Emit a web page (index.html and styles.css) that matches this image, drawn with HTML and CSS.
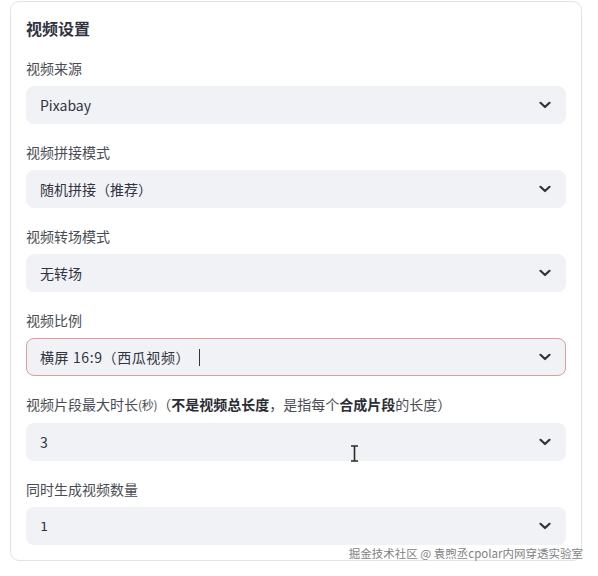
FILE: index.html
```html
<!DOCTYPE html>
<html lang="zh">
<head>
<meta charset="utf-8">
<link rel="stylesheet" href="styles.css">
</head>
<body>
<div class="card">
  <div class="title">视频设置</div>
  <div class="field">
    <div class="label">视频来源</div>
    <div class="select"><span class="value">Pixabay</span><svg class="chev" viewBox="0 0 12 8"><path d="M1.5 1.8 L6 6 L10.5 1.8"/></svg></div>
  </div>
  <div class="field">
    <div class="label">视频拼接模式</div>
    <div class="select"><span class="value">随机拼接（推荐）</span><svg class="chev" viewBox="0 0 12 8"><path d="M1.5 1.8 L6 6 L10.5 1.8"/></svg></div>
  </div>
  <div class="field">
    <div class="label">视频转场模式</div>
    <div class="select"><span class="value">无转场</span><svg class="chev" viewBox="0 0 12 8"><path d="M1.5 1.8 L6 6 L10.5 1.8"/></svg></div>
  </div>
  <div class="field">
    <div class="label">视频比例</div>
    <div class="select focus"><span class="value wide">横屏 16:9（西瓜视频）<span class="caret"></span></span><svg class="chev" viewBox="0 0 12 8"><path d="M1.5 1.8 L6 6 L10.5 1.8"/></svg></div>
  </div>
  <div class="field">
    <div class="label">视频片段最大时长<span class="small">(秒)</span>（<b>不是视频总长度</b>，是指每个<b>合成片段</b>的长度）</div>
    <div class="select"><span class="value">3</span><svg class="chev" viewBox="0 0 12 8"><path d="M1.5 1.8 L6 6 L10.5 1.8"/></svg>
      <svg class="ibeam" viewBox="0 0 9 17"><path d="M1 1 H8 M4.5 1 V16 M1 16 H8"/></svg>
    </div>
  </div>
  <div class="field">
    <div class="label">同时生成视频数量</div>
    <div class="select"><span class="value mono">1</span><svg class="chev" viewBox="0 0 12 8"><path d="M1.5 1.8 L6 6 L10.5 1.8"/></svg></div>
  </div>
</div>
<div class="watermark">掘金技术社区 @ 袁煦丞cpolar内网穿透实验室</div>
</body>
</html>
```
FILE: styles.css
```css
html, body {
  margin: 0;
  padding: 0;
  background: #ffffff;
}
body {
  font-family: "Noto Sans CJK SC", "Noto Sans", sans-serif;
  color: #31333f;
  width: 598px;
  height: 576px;
  position: relative;
  overflow: hidden;
}
.card {
  margin: 1px 0 0 10px;
  width: 572px;
  box-sizing: border-box;
  border: 1px solid #e3e3e6;
  border-radius: 9px;
  padding: 14px 15px 15px 15px;
  display: flex;
  flex-direction: column;
  gap: 18px;
}
.title {
  font-size: 16px;
  font-weight: 700;
  line-height: 24px;
  color: #31333f;
}
.field {
  display: flex;
  flex-direction: column;
  gap: 8px;
}
.label {
  font-size: 14px;
  line-height: 20px;
  color: #4a4c55;
  white-space: nowrap;
}
.label b {
  font-weight: 700;
  color: #2b2d36;
}
.label .small {
  font-size: 12px;
  letter-spacing: -0.3px;
}
.select {
  position: relative;
  height: 38px;
  box-sizing: border-box;
  background: #f0f2f6;
  border-radius: 8px;
  border: 1px solid #f0f2f6;
  display: flex;
  align-items: center;
  justify-content: space-between;
  padding: 0 14px 0 13px;
}
.select.focus {
  border-color: #e49b9b;
}
.value {
  font-size: 14px;
  color: #31333f;
  display: flex;
  align-items: center;
}
.value.wide {
  letter-spacing: 0.6px;
}
.value.mono {
  font-family: "DejaVu Sans Mono", monospace;
  font-size: 13px;
}
.caret {
  display: inline-block;
  width: 1px;
  height: 17px;
  background: #31333f;
  margin-left: 9px;
}
.chev {
  width: 12px;
  height: 8px;
  fill: none;
  stroke: #31333f;
  stroke-width: 2.2;
  stroke-linecap: round;
  stroke-linejoin: round;
}
.ibeam {
  position: absolute;
  left: 323px;
  top: 21px;
  width: 9px;
  height: 17px;
  fill: none;
  stroke: #2a2a2a;
  stroke-width: 1.6;
}
.watermark {
  position: absolute;
  right: 15px;
  top: 545px;
  font-size: 11.5px;
  line-height: 16px;
  color: #7f7f7f;
  white-space: nowrap;
  text-shadow: 0 0 2px #fff, 0 0 2px #fff;
}
```
